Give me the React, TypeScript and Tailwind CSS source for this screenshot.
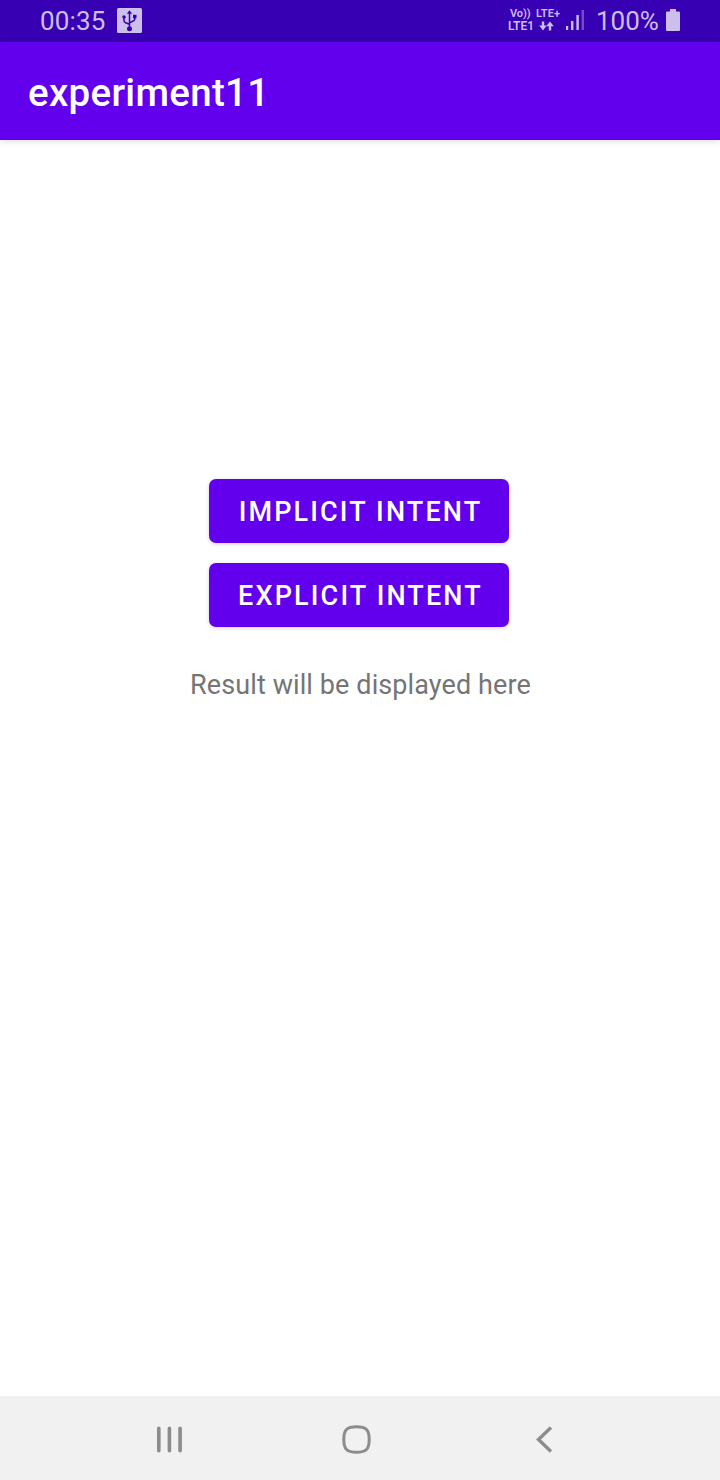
function UsbIcon() {
  return (
    <svg className="block h-[25px] w-[25px]" viewBox="0 0 25 25" fill="none">
      <rect width="25" height="25" rx="1.5" fill="#cdbfec" />
      <g stroke="#3700b3" strokeWidth="1.5">
        <path d="M12.5 20V4.5" />
        <path d="M7 9v3.700c0 1 .6 1.600 1.600 2l3.900 1.500M17.800 8v3c0 1-.6 1.600-1.600 2l-3.700 1.800" />
      </g>
      <g fill="#3700b3">
        <path d="M12.5 2.200l2.700 3.600H9.800z" />
        <circle cx="12.5" cy="20.700" r="2.500" />
        <circle cx="7" cy="9" r="1.800" />
        <rect x="16" y="6.800" width="3.500" height="3.500" />
      </g>
    </svg>
  );
}

function DataArrows() {
  return (
    <svg className="block h-[10px] w-[15px]" viewBox="0 0 15 10" fill="#cdbfec">
      <path d="M2.800 .4h2.400v4.200h2.500L4 9.400.2 4.600h2.600zM9.800 9.400h2.400V5.200h2.600L11 .4 7.200 5.200h2.600z" />
    </svg>
  );
}

function SignalIcon() {
  return (
    <svg className="block h-[21px] w-[19px]" viewBox="0 0 19 21" fill="#cdbfec">
      <rect x="0" y="16" width="2.2" height="4" />
      <rect x="5" y="11" width="2.4" height="9" />
      <rect x="10.4" y="5" width="2.4" height="15" />
      <rect x="15.6" y="0" width="2.4" height="20" opacity=".4" />
    </svg>
  );
}

function BatteryIcon() {
  return (
    <svg className="block h-[22px] w-[14px]" viewBox="0 0 14 22" fill="#cdbfec">
      <path d="M4 0h6v2.500h3a1 1 0 0 1 1 1V21a1 1 0 0 1-1 1H1a1 1 0 0 1-1-1V3.500a1 1 0 0 1 1-1h3z" />
    </svg>
  );
}

function StatusBar() {
  return (
    <header className="flex h-[42px] items-start justify-between bg-[#3700b3] pr-[40px] pl-[40px] text-[#cdbfec]">
      <div className="flex pt-[8px]">
        <span className="-mt-[1px] w-[77px] text-[26px] leading-[28px] tracking-[0.15px]">00:35</span>
        <UsbIcon />
      </div>
      <div className="flex">
        <div className="w-[58px] pt-[8px] text-[11px] leading-[12px] font-semibold whitespace-nowrap">
          <div className="flex h-[12px]">
            <span className="w-[28px] pl-[2px] tracking-[-0.05px]">Vo))</span>
            <span className="tracking-[0.15px]">LTE+</span>
          </div>
          <div className="flex h-[12px] items-center">
            <span className="w-[30.500px] text-[12px]">LTE1</span>
            <DataArrows />
          </div>
        </div>
        <div className="w-[30px] pt-[10px]">
          <SignalIcon />
        </div>
        <span className="w-[70px] pt-[7px] text-[26px] leading-[28px]">100%</span>
        <div className="pt-[9px]">
          <BatteryIcon />
        </div>
      </div>
    </header>
  );
}

function ActionButton({ label }: { label: string }) {
  return (
    <button className="flex h-[64px] w-[300px] items-center justify-center rounded-[7px] bg-[#6200ee] pt-[1px] pl-[3px] text-[27px] leading-[32px] font-medium tracking-[2.15px] whitespace-nowrap text-white shadow-[0_1px_4px_rgba(0,0,0,0.18)]">
      {label}
    </button>
  );
}

export default function App() {
  return (
    <div className="flex h-[1480px] w-[720px] flex-col overflow-hidden bg-white font-['Roboto',sans-serif]">
      <StatusBar />
      <div className="flex h-[98px] shrink-0 items-center bg-[#6200ee] pt-[3px] pl-[28px] shadow-[0_1px_7px_rgba(0,0,0,0.14)]">
        <h1 className="text-[38.5px] leading-[46px] font-medium tracking-[0.3px] text-white">experiment11</h1>
      </div>
      <main className="flex flex-1 flex-col items-center pt-[339px]">
        <div className="flex flex-col gap-[20px] pr-[2px]">
          <ActionButton label="IMPLICIT INTENT" />
          <ActionButton label="EXPLICIT INTENT" />
        </div>
        <p className="mt-[42px] pl-px text-[27px] leading-[32px] tracking-[0.1px] text-[#757575]">Result will be displayed here</p>
      </main>
      <nav className="flex h-[84px] items-center bg-[#f1f1f1] pt-[3px] pl-[156px] text-[#8c8c8c]">
        <svg className="mr-[159px] h-[28px] w-[27px]" viewBox="0 0 27 28" fill="none" stroke="currentColor" strokeWidth="3.600" strokeLinecap="round">
          <path d="M2.800 2.300v22.400M13.400 2.300v22.400M24.100 2.300v22.400" />
        </svg>
        <svg className="mr-[165px] h-[29px] w-[29px]" viewBox="0 0 29 29" fill="none" stroke="currentColor" strokeWidth="3">
          <path d="M14.500 1.800c9.700 0 12.700 3 12.700 12.700s-3 12.700-12.700 12.700-12.700-3-12.700-12.700 3-12.700 12.700-12.700z" />
        </svg>
        <svg className="h-[28px] w-[17px]" viewBox="0 0 17 28" fill="none" stroke="currentColor" strokeWidth="3.400">
          <path d="M15 1.500L2.500 13.500 15 25.500" />
        </svg>
      </nav>
    </div>
  );
}
